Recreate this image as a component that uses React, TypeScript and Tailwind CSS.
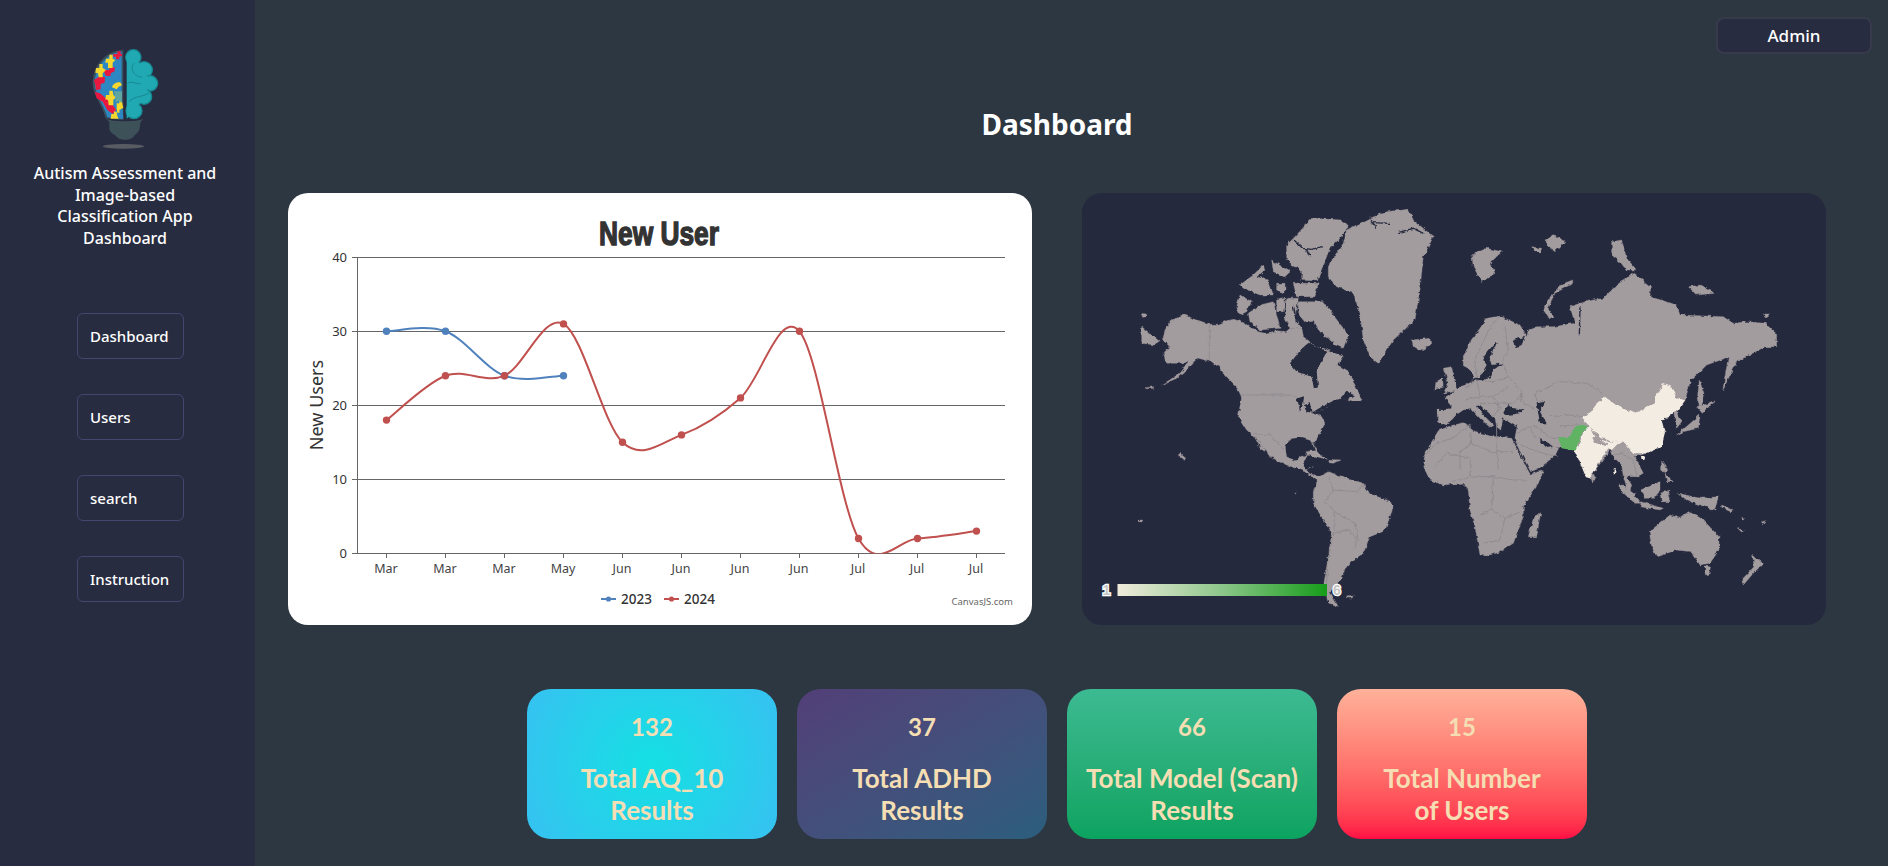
import React from 'react';

const tickLabels = ['Mar', 'Mar', 'Mar', 'May', 'Jun', 'Jun', 'Jun', 'Jun', 'Jul', 'Jul', 'Jul'];
const series2023 = [30, 30, 24, 24];
const series2024 = [18, 24, 24, 31, 15, 16, 21, 30, 2, 2, 3];

const xAt = (i: number) => 386.5 + i * 59;
const yAt = (v: number) => 553.3 - v * 7.4;

// same bezier spline canvasjs draws (tension 2)
const splinePath = (vals: number[]) => {
  const pts = vals.map((v, i) => ({ x: xAt(i), y: yAt(v) }));
  let d = `M${pts[0].x},${pts[0].y}`;
  for (let i = 0; i < pts.length - 1; i++) {
    const p0 = pts[Math.max(i - 1, 0)];
    const p1 = pts[i];
    const p2 = pts[i + 1];
    const p3 = pts[Math.min(i + 2, pts.length - 1)];
    d += `C${p1.x + (p2.x - p0.x) / 6},${p1.y + (p2.y - p0.y) / 6} ${p2.x - (p3.x - p1.x) / 6},${p2.y - (p3.y - p1.y) / 6} ${p2.x},${p2.y}`;
  }
  return d;
};

const NewUserChart: React.FC = () => (
  <svg viewBox="288 193 744 432" className="block w-full h-full" style={{ fontFamily: '"Noto Sans", sans-serif' }}>
    <defs>
      <clipPath id="plot">
        <rect x="357" y="250" width="648" height="303.5" />
      </clipPath>
    </defs>
    <text x="599" y="245" fontSize="33" fontWeight="700" fill="#333" stroke="#333" strokeWidth="1.4" textLength="120" lengthAdjust="spacingAndGlyphs" style={{ fontFamily: '"Liberation Sans", sans-serif' }}>New User</text>
    {[40, 30, 20, 10, 0].map((v, i) => {
      const y = 257.5 + i * 74;
      return (
        <g key={v}>
          <line x1="352" x2="1005" y1={y} y2={y} stroke="#666" />
          <text x="347" y={y + 4.5} textAnchor="end" fontSize="13" fill="#333">{v}</text>
        </g>
      );
    })}
    <line x1="357.5" x2="357.5" y1="257" y2="554" stroke="#666" />
    {tickLabels.map((m, i) => (
      <g key={i}>
        <line x1={xAt(i)} x2={xAt(i)} y1="553" y2="558" stroke="#666" />
        <text x={xAt(i) - 0.5} y="573" textAnchor="middle" fontSize="12.5" fill="#444">{m}</text>
      </g>
    ))}
    <text transform="translate(323,405) rotate(-90)" textAnchor="middle" fontSize="18" fill="#333">New Users</text>
    <g clipPath="url(#plot)" fill="none" strokeWidth="2">
      <path d={splinePath(series2023)} stroke="#4f81bc" />
      <path d={splinePath(series2024)} stroke="#c0504e" />
    </g>
    {series2023.map((v, i) => <circle key={i} cx={xAt(i)} cy={yAt(v)} r="3.7" fill="#4f81bc" />)}
    {series2024.map((v, i) => <circle key={i} cx={xAt(i)} cy={yAt(v)} r="3.7" fill="#c0504e" />)}
    <line x1="601" x2="616" y1="599" y2="599" stroke="#4f81bc" strokeWidth="2" />
    <circle cx="608.5" cy="599" r="2.6" fill="#4f81bc" />
    <text x="621" y="603.5" fontSize="13.5" fontWeight="500" fill="#333">2023</text>
    <line x1="664" x2="679" y1="599" y2="599" stroke="#c0504e" strokeWidth="2" />
    <circle cx="671.5" cy="599" r="2.6" fill="#c0504e" />
    <text x="684" y="603.5" fontSize="13.5" fontWeight="500" fill="#333">2024</text>
    <text x="1013" y="605" textAnchor="end" fontSize="9.5" fill="#666">CanvasJS.com</text>
  </svg>
);

const land = '#a39c9f';
const edge = '#8b888d';
const cream = '#f3ece2';
const bay = '#25293e';

// americas and the arctic, traced at 3x from the card's left side
const westLand = [
  'M255,420 L272,393 L310,375 L388,403 L415,403 L440,392 L462,388 L495,400 L510,412 L535,425 L555,430 L590,422 L618,425 L630,415 L665,415 L670,440 L690,455 L712,470 L740,478 L765,490 L790,500 L772,525 L800,540 L825,585 L847,632 L815,635 L790,625 L770,628 L745,650 L705,668 L725,680 L735,700 L720,730 L700,762 L716,795 L708,790 L695,752 L660,742 L635,746 L615,765 L620,800 L645,812 L662,800 L682,795 L668,825 L690,852 L722,858 L745,845 L790,860 L850,880 L870,912 L935,935 L940,952 L915,1022 L870,1040 L850,1090 L820,1110 L800,1130 L780,1170 L750,1205 L775,1250 L745,1238 L730,1190 L745,1100 L755,1030 L700,940 L700,905 L712,872 L670,842 L620,825 L570,800 L530,745 L500,720 L475,680 L485,622 L470,590 L440,560 L415,530 L395,515 L355,505 L320,540 L290,565 L245,585 L300,550 L330,512 L305,520 L260,520 L250,490 L270,470 L248,450 Z',
  'M520,735 L530,745 L558,785 L545,780 Z',
  'M745,225 L790,160 L800,120 L870,85 L920,65 L985,58 L1000,90 L1060,140 L1030,200 L1020,300 L1005,390 L940,450 L895,520 L870,500 L850,450 L840,370 L820,310 L770,290 L745,260 Z',
  'M645,140 L695,85 L785,90 L805,110 L780,145 L750,175 L730,225 L712,270 L665,268 L665,245 L620,210 L620,165 Z',
  'M640,280 L715,280 L705,320 L650,320 Z',
  'M575,210 L630,245 L615,260 L580,245 Z',
  'M480,285 L520,255 L550,225 L555,240 L530,260 L565,270 L580,315 L540,315 L490,295 Z',
  'M590,280 L615,280 L615,310 L590,300 Z',
  'M480,315 L515,335 L500,365 L480,375 L470,350 Z',
  'M505,370 L540,345 L580,335 L600,415 L540,420 L510,395 Z',
  'M590,330 L615,325 L610,365 L590,365 Z',
  'M620,325 L655,325 L645,385 L665,415 L630,415 L615,385 Z',
  'M655,335 L730,335 L805,435 L790,475 L765,465 L745,445 L720,425 L700,390 L670,395 L655,365 Z',
  'M185,410 L240,455 L225,465 L185,460 Z',
  'M185,370 L198,372 L200,380 L188,382 Z',
  'M995,450 L1050,445 L1052,465 L1020,482 L1000,470 Z',
  'M1090,535 L1115,530 L1130,600 L1090,610 L1105,580 Z',
  'M1068,575 L1088,565 L1090,592 L1065,598 Z',
  'M675,785 L705,782 L742,808 L710,800 L680,795 Z',
  'M745,808 L780,810 L760,820 L748,818 Z',
  'M800,1218 L820,1216 L815,1224 L803,1224 Z',
  'M195,593 L222,590 L218,595 L198,596 Z',
  'M300,790 L318,805 L312,808 L295,795 Z',
  'M178,990 L188,990 L186,996 L178,995 Z',
  'M645,906 L650,906 L650,912 L645,912 Z',
];

const westBays = [
  'M630,520 L660,482 L690,458 L722,476 L742,482 L710,540 L714,592 L702,596 L695,560 L650,545 Z',
  'M672,425 L695,400 L715,428 L745,450 L760,470 L720,475 L690,455 Z',
  'M650,625 L672,618 L670,640 L660,665 L655,640 Z',
  'M672,645 L690,640 L695,668 L680,665 Z',
  'M695,668 L725,650 L760,632 L765,640 L730,658 L700,672 Z',
  'M780,625 L800,605 L822,615 L800,630 Z',
];

// fjords and inlets, thin dark cuts in the arctic land
const westInlets = [
  'M642,150 L668,175 L695,178 L728,170',
  'M680,178 L690,200',
  'M870,90 L890,115 M870,98 L930,100',
  'M955,128 L1000,115 L1030,130',
  'M640,345 L650,400',
];

const westBorders = [
  'M388,403 V516',
  'M482,615 H628 L650,622 M698,668 L700,672',
  'M520,730 L570,735 L612,780',
  'M745,860 L760,900 L735,935 L765,965 L825,1000 L835,1050 L820,1075',
  'M760,900 L830,905 L860,880',
  'M765,965 L760,1040 L745,1100 L740,1180',
  'M760,1030 L810,1020 L830,1050',
  'M670,845 L700,830',
];

// eurasia, africa and oceania, traced at 3x from the card's right side
const eastLand = [
  'M-128,660 L-128,695 L-105,708 L-85,690 L-72,675 L-50,660 L-28,655 L0,685 L30,712 L40,705 L10,675 L-10,648 L0,645 L45,685 L50,710 L62,720 L68,690 L62,680 L105,707 L112,702 L105,745 L108,760 L152,845 L178,835 L225,797 L236,775 L222,770 L200,775 L175,745 L205,758 L225,775 L240,772 L290,775 L290,790 L330,865 L345,840 L385,790 L390,770 L400,800 L425,825 L430,860 L440,895 L450,905 L455,885 L440,860 L470,860 L490,850 L470,810 L465,800 L500,790 L545,755 L555,725 L545,695 L535,685 L560,690 L580,660 L590,715 L605,695 L590,665 L615,632 L632,570 L660,545 L680,525 L745,502 L730,590 L728,600 L770,515 L855,470 L890,470 L890,432 L855,400 L800,395 L760,400 L730,380 L600,375 L590,345 L560,335 L510,320 L512,290 L460,250 L410,285 L370,325 L340,330 L300,340 L270,350 L285,400 L220,410 L170,410 L145,420 L140,440 L120,405 L60,378 L20,385 L0,415 L-30,455 L-50,500 L-50,530 L-30,540 L-15,565 L-28,575 L-45,585 L-70,595 L-80,610 L-105,625 L-85,650 L-95,660 Z',
  'M-170,830 L-165,790 L-125,722 L-90,708 L-50,698 L-20,722 L30,738 L95,745 L150,852 L190,842 L175,880 L130,950 L130,980 L100,1060 L60,1085 L20,1098 L0,1095 L-15,1010 L-30,960 L-35,900 L-55,880 L-110,885 L-150,870 Z',
  'M145,1040 L160,985 L182,968 L170,1040 Z',
  'M508,1025 L570,975 L600,985 L625,965 L655,980 L670,990 L717,1040 L717,1080 L690,1120 L660,1125 L635,1085 L590,1080 L530,1100 L515,1070 Z',
  'M675,1128 L692,1130 L685,1158 L675,1150 Z',
  'M818,1095 L850,1120 L820,1150 L790,1185 L785,1170 L822,1130 Z',
  'M420,880 L460,910 L485,940 L465,940 L420,900 Z',
  'M485,900 L540,875 L540,900 L525,925 L495,925 Z',
  'M485,935 L550,955 L540,960 L480,950 Z',
  'M540,910 L570,900 L565,915 L570,935 L545,935 Z',
  'M595,910 L660,925 L715,920 L705,960 L660,945 L620,930 Z',
  'M545,810 L560,840 L555,850 L545,840 Z',
  'M555,850 L580,875 L560,875 Z',
  'M590,735 L660,675 L655,715 L610,725 Z',
  'M650,650 L705,635 L665,668 Z',
  'M658,570 L672,610 L660,655 L652,625 L655,600 Z',
  'M335,842 L348,866 L338,876 L332,858 Z',
  'M278,270 L240,285 L210,325 L190,360 L210,388 L222,382 L205,355 L225,310 L278,280 Z',
  'M395,155 L425,150 L440,205 L470,240 L440,240 L420,215 L395,195 Z',
  'M-25,195 L20,175 L65,185 L30,220 L45,250 L5,275 L-20,230 Z',
  'M155,170 L185,175 L180,190 L165,185 Z',
  'M195,150 L225,135 L255,155 L225,185 L205,170 Z',
  'M625,290 L660,285 L705,310 L650,315 Z',
  'M850,372 L868,372 L860,384 Z',
  'M725,945 L760,960 L755,965 L725,952 Z',
  'M785,985 L795,990 L790,995 Z',
  'M770,1012 L790,1022 L785,1026 Z',
  'M845,995 L858,992 L848,1005 Z',
];

const eastBays = [
  'M70,668 L85,642 L100,655 L135,660 L110,672 L75,675 Z',
  'M170,640 L195,635 L180,665 L200,700 L180,700 Z',
  'M45,455 L20,485 L10,510 L20,525 L0,560 L-15,565 L-28,575 L30,565 L40,540 L68,520 L35,525 L28,505 L50,460 Z',
  'M100,450 L135,440 L125,465 L110,472 Z',
  'M540,690 L560,680 L552,698 Z',
];

// borders on the europe / africa side, traced from a closer crop
const midBorders = [
  'M370,400 L385,440 L425,485 L425,515 L465,540',
  'M465,490 L540,455 L620,460 L670,490',
  'M465,490 L470,510 L490,515',
  'M510,560 L570,555 L610,560 M540,590 L600,580',
  'M360,260 L330,290 L285,390 L290,440',
  'M375,290 L385,360 L365,395',
  'M255,475 L290,450 L340,455 L385,440',
  'M290,450 L300,500 L340,500 L385,470',
  'M255,510 L300,500 M340,500 L360,530 L340,560',
  'M300,520 L350,520 L400,520 L430,490',
  'M130,680 L170,640 L215,625 L270,585',
  'M270,585 L275,640 L240,665 L240,720',
  'M350,585 V665 H400',
  'M270,640 L350,670 M350,665 L355,720',
  'M410,610 L445,590 L470,590 L510,625 L540,625',
  'M445,590 L470,625 M410,640 L470,665 L530,680',
];

const eastBorders = [
  'M-135,830 L-100,790 L-30,805 L-30,860 L-85,875',
  'M-30,860 L40,860 L100,870 L140,870 M40,860 L35,960 L75,985 L120,965 M35,960 L0,975 M75,985 L60,1050 L10,1060',
  'M430,795 L460,810 L470,855 M400,795 L430,790',
];

const WorldMap: React.FC = () => (
  <svg viewBox="1082 193 744 432" className="block w-full h-full">
    <defs>
      <linearGradient id="scale">
        <stop offset="0" stopColor="#f0ebdc" />
        <stop offset="0.5" stopColor="#8cc68a" />
        <stop offset="1" stopColor="#169c1a" />
      </linearGradient>
      {/* roughens the hand traced coast so it reads like real map data */}
      <filter id="coast" filterUnits="userSpaceOnUse" x="1082" y="193" width="744" height="432">
        <feTurbulence type="fractalNoise" baseFrequency="0.22" numOctaves="2" seed="4" />
        <feDisplacementMap in="SourceGraphic" scale="4" xChannelSelector="R" yChannelSelector="G" />
      </filter>
    </defs>
    <g filter="url(#coast)">
      <g transform="translate(1080,190) scale(0.3333)">
        <g fill={land} stroke={land} strokeWidth="1" strokeLinejoin="round">
          {westLand.map((d, i) => <path key={i} d={d} />)}
        </g>
        <g fill={bay}>
          {westBays.map((d, i) => <path key={i} d={d} />)}
        </g>
        <g fill="none" stroke={bay} strokeWidth="4">
          {westInlets.map((d, i) => <path key={i} d={d} />)}
        </g>
        <g fill="none" stroke={edge} strokeWidth="2.5">
          {westBorders.map((d, i) => <path key={i} d={d} />)}
        </g>
      </g>
      <g transform="translate(1480,190) scale(0.3333)">
        <g fill={land} stroke={land} strokeWidth="1" strokeLinejoin="round">
          {eastLand.map((d, i) => <path key={i} d={d} />)}
        </g>
        <g fill={bay}>
          {eastBays.map((d, i) => <path key={i} d={d} />)}
        </g>
        <path d="M300,352 L298,436" fill="none" stroke={bay} strokeWidth="4" />
        <g fill="none" stroke={edge} strokeWidth="2.5">
          {eastBorders.map((d, i) => <path key={i} d={d} />)}
        </g>
      </g>
      <g transform="translate(1380,230) scale(0.3333)" fill="none" stroke={edge} strokeWidth="2.5">
        {midBorders.map((d, i) => <path key={i} d={d} />)}
      </g>
      <g transform="translate(1480,190) scale(0.3333)">
        <path fill={cream} d="M305,685 L340,660 L350,640 L375,620 L415,650 L465,670 L525,640 L525,620 L550,582 L575,590 L590,625 L615,630 L595,660 L545,692 L555,730 L545,770 L500,790 L460,790 L430,755 L395,755 L360,740 L330,710 Z" />
        <path fill={cream} d="M330,708 L348,745 L395,758 L425,750 L395,780 L385,775 L345,840 L330,865 L318,862 L290,795 L275,775 L295,770 L310,725 Z" />
        <path fill={land} d="M336,742 L350,745 L382,760 L378,768 L345,758 Z" />
        <path fill={cream} d="M483,798 L497,798 L493,810 L485,810 Z" />
        <path fill={cream} d="M402,835 L408,835 L405,850 L400,850 Z" />
        <path fill="#5eb362" d="M235,745 L262,745 L290,705 L305,702 L327,712 L305,725 L290,775 L285,782 L245,775 Z" />
      </g>
    </g>
    <rect x="1117.5" y="584" width="209.5" height="12" fill="url(#scale)" />
    <g fontSize="14" fontWeight="700" fill="#c4c4c4" stroke="#fff" strokeWidth="2.5" textAnchor="middle" style={{ fontFamily: '"Liberation Sans", sans-serif', paintOrder: 'stroke' }}>
      <text x="1106.5" y="595">1</text>
      <text x="1337" y="595">6</text>
    </g>
  </svg>
);

const Logo: React.FC = () => (
  <svg viewBox="0 0 330 360" className="block w-[110px] h-[120px]">
    <path d="M160,30 C110,30 68,75 68,130 C68,165 95,190 107,235 L160,240 Z" fill="#3a5160" />
    <path d="M155,35 C112,38 75,80 74,130 C74,162 100,190 112,232 L155,236 Z" fill="#2c87c3" />
    <g fill="#e8183f">
      <path d="M130,42 L142,42 L142,34 L152,34 L152,42 L156,42 L156,48 L148,50 L148,58 L138,58 L138,50 L130,50 Z" />
      <path d="M100,90 L118,90 L120,80 L134,82 L134,94 L122,100 L122,108 L108,108 L104,100 Z" />
      <path d="M72,120 L90,108 L105,112 L104,128 L92,132 L92,148 L78,150 L76,136 Z" />
      <path d="M74,155 L90,160 L104,172 L122,185 L138,210 L128,222 L112,210 L98,185 L80,175 Z" />
    </g>
    <g fill="#f6d72e">
      <path d="M108,56 L118,56 L118,44 L128,44 L128,56 L136,60 L128,68 L128,84 L114,84 L114,68 L106,68 Z" />
      <path d="M78,84 L88,84 L88,72 L98,72 L98,84 L108,90 L98,100 L98,112 L86,112 L84,100 L76,98 Z" />
      <path d="M108,165 L118,165 L118,152 L128,152 L130,165 L138,172 L130,180 L130,196 L116,196 L114,180 L106,178 Z" />
      <path d="M126,142 C128,132 142,124 152,128 L156,136 L146,140 L140,148 Z" />
      <path d="M140,190 L148,190 L148,180 L156,184 L158,196 L160,204 L152,208 L152,218 L142,218 L140,206 Z" />
      <path d="M124,222 L132,222 L132,214 L140,216 L142,228 L146,236 L122,236 Z" />
    </g>
    <path d="M132,154 L156,154 L156,188 L146,182 L138,188 Z" fill="#5fa5a0" />
    <path d="M148,210 L158,206 L160,236 L150,236 Z" fill="#2c87c3" />
    <g fill="#20a9b2" stroke="#178992" strokeWidth="4">
      <circle cx="190" cy="52" r="23" />
      <circle cx="222" cy="90" r="25" />
      <circle cx="240" cy="130" r="23" />
      <circle cx="222" cy="170" r="23" />
      <circle cx="192" cy="212" r="24" />
    </g>
    <path d="M170,40 L200,60 L225,90 L240,130 L222,170 L195,212 L170,236 Z" fill="#20a9b2" />
    <g fill="none" stroke="#178992" strokeWidth="3">
      <path d="M192,70 C176,90 198,112 216,112" />
      <path d="M176,186 C194,166 220,172 238,158" />
      <path d="M172,130 C188,120 200,136 212,130" />
    </g>
    <path d="M108,236 C125,246 205,246 220,236 L212,246 L208,268 C205,278 198,282 194,286 C184,304 146,304 136,286 C128,282 120,276 118,268 L118,246 Z" fill="#3d5159" />
    <ellipse cx="160" cy="319" rx="62" ry="7" fill="#585c62" />
  </svg>
);

const navItems = ['Dashboard', 'Users', 'search', 'Instruction'];

const Sidebar: React.FC = () => (
  <aside className="w-[255px] h-full shrink-0 bg-[#282c40] flex flex-col">
    <div className="mt-[40px] self-center mr-[5px]">
      <Logo />
    </div>
    <h2 className="mt-[3px] mr-[5px] text-center text-white text-[16px] leading-[21.5px] font-medium">
      Autism Assessment and<br />Image-based<br />Classification App<br />Dashboard
    </h2>
    <nav className="mt-[64px] ml-[77px] flex flex-col gap-[35px]">
      {navItems.map(item => (
        <a key={item} className="w-[107px] h-[46px] flex items-center pl-3 border border-[#43466f] rounded-md text-white text-[15px] font-medium">
          {item}
        </a>
      ))}
    </nav>
  </aside>
);

const stats = [
  { value: 132, lines: ['Total AQ_10', 'Results'], bg: 'bg-[radial-gradient(circle,#15e0e3,#37c1f1)]' },
  { value: 37, lines: ['Total ADHD', 'Results'], bg: 'bg-gradient-to-br from-[#523f78] to-[#2a5e7d]' },
  { value: 66, lines: ['Total Model (Scan)', 'Results'], bg: 'bg-gradient-to-b from-[#3cba92] to-[#0ba360]' },
  { value: 15, lines: ['Total Number', 'of Users'], bg: 'bg-gradient-to-b from-[#ffb199] to-[#ff0844]' },
];

const App: React.FC = () => {
  return (
    <div className="flex h-screen overflow-hidden bg-[#2d3741]" style={{ fontFamily: '"Noto Sans", sans-serif' }}>
      <Sidebar />
      <main className="flex-1 min-w-0">
        <div className="flex justify-end pt-[17px] pr-4">
          <button className="w-[156px] h-[37px] bg-[#282c40] border-2 border-[#383a4c] rounded-lg text-white text-[17px] font-medium">Admin</button>
        </div>
        <div className="pl-[33px] pr-[62px]">
          <h1 className="mt-[50px] h-[40px] leading-[40px] text-center text-white text-[28px] font-bold">Dashboard</h1>
          <div className="mt-[49px] flex gap-[50px] h-[432px]">
            <div className="flex-1 bg-white rounded-[20px] overflow-hidden">
              <NewUserChart />
            </div>
            <div className="flex-1 bg-[#25293e] rounded-[20px] overflow-hidden">
              <WorldMap />
            </div>
          </div>
          <div className="mt-[64px] flex justify-center gap-5">
            {stats.map(s => (
              <div key={s.value} className={`w-[250px] h-[150px] rounded-[24px] pt-[22px] text-center text-[#f5deb3] text-[26px] leading-[32px] font-bold ${s.bg}`} style={{ fontFamily: 'Lato, sans-serif' }}>
                <div className="text-[24px]">{s.value}</div>
                <div className="mt-[19px]">{s.lines[0]}<br />{s.lines[1]}</div>
              </div>
            ))}
          </div>
        </div>
      </main>
    </div>
  );
};

export default App;
